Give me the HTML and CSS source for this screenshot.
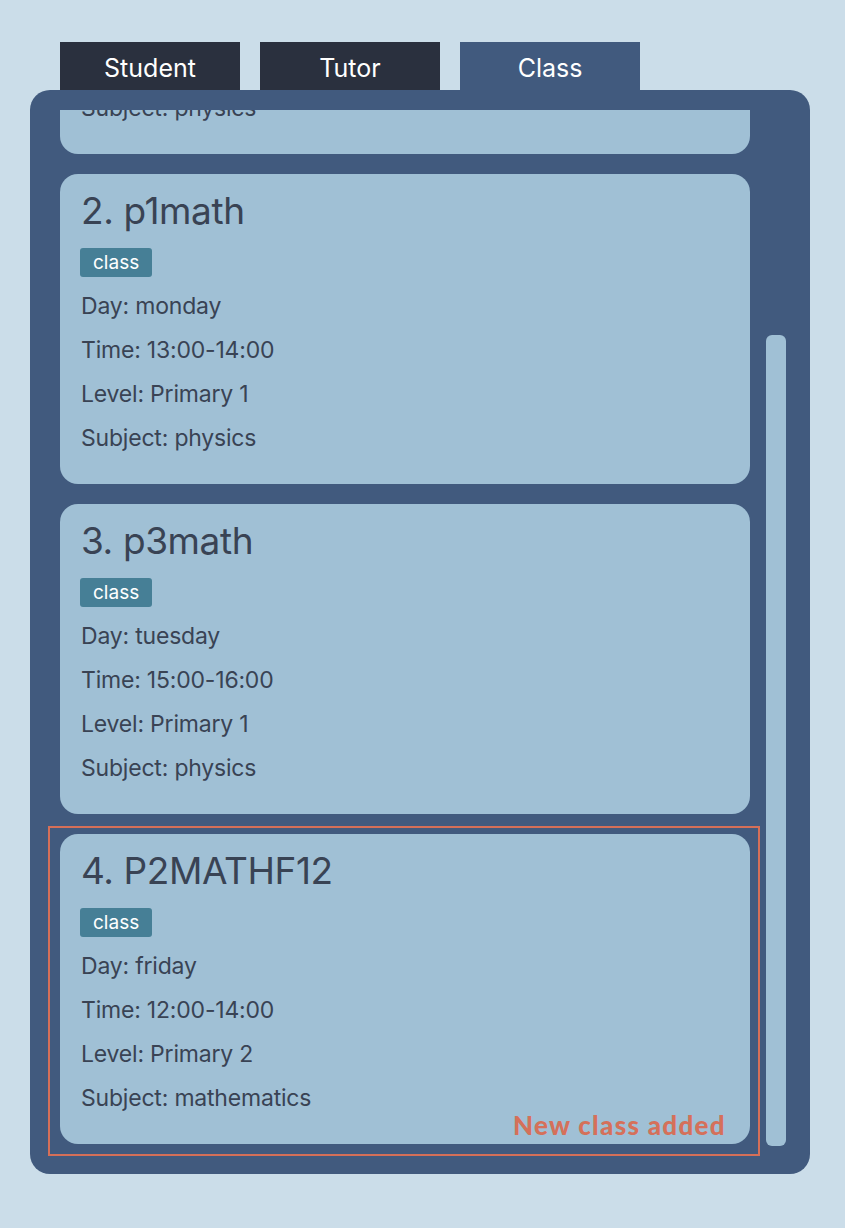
FILE: index.html
```html
<!DOCTYPE html>
<html>
<head>
<meta charset="utf-8">
<link rel="stylesheet" href="styles.css">
</head>
<body>
<div class="app">
  <div class="tabs">
    <div class="tab">Student</div>
    <div class="tab">Tutor</div>
    <div class="tab active">Class</div>
  </div>
  <div class="panel">
    <div class="viewport">
      <div class="list">
        <div class="card">
          <div class="title">1. p1phys</div>
          <span class="tag">class</span>
          <div class="line">Day: monday</div>
          <div class="line">Time: 10:00-11:00</div>
          <div class="line">Level: Primary 1</div>
          <div class="line">Subject: physics</div>
        </div>
        <div class="card">
          <div class="title">2. p1math</div>
          <span class="tag">class</span>
          <div class="line">Day: monday</div>
          <div class="line">Time: 13:00-14:00</div>
          <div class="line">Level: Primary 1</div>
          <div class="line">Subject: physics</div>
        </div>
        <div class="card">
          <div class="title">3. p3math</div>
          <span class="tag">class</span>
          <div class="line">Day: tuesday</div>
          <div class="line">Time: 15:00-16:00</div>
          <div class="line">Level: Primary 1</div>
          <div class="line">Subject: physics</div>
        </div>
        <div class="card">
          <div class="title">4. P2MATHF12</div>
          <span class="tag">class</span>
          <div class="line">Day: friday</div>
          <div class="line">Time: 12:00-14:00</div>
          <div class="line">Level: Primary 2</div>
          <div class="line">Subject: mathematics</div>
        </div>
      </div>
    </div>
    <div class="track"><div class="thumb"></div></div>
    <div class="highlight"><span class="note">New class added</span></div>
  </div>
</div>
</body>
</html>
```
FILE: styles.css
```css
* { box-sizing: border-box; }
body {
  margin: 0;
  background: #cbdde9;
  font-family: Inter, "Noto Sans", sans-serif;
}
.app {
  padding: 42px 35px 0 30px;
}
.tabs {
  display: flex;
  gap: 20px;
  margin-left: 30px;
}
.tab {
  width: 180px;
  height: 48px;
  padding-top: 5px;
  background: #2a303e;
  color: #ffffff;
  font-size: 25px;
  line-height: 43px;
  text-align: center;
}
.tab.active {
  background: #415a7e;
}
.panel {
  position: relative;
  width: 780px;
  height: 1084px;
  background: #415a7e;
  border-radius: 20px;
  padding: 20px 0 0 30px;
  display: flex;
  gap: 16px;
}
.viewport {
  width: 690px;
  height: 1044px;
  overflow: hidden;
}
.list {
  margin-top: -266px;
  display: flex;
  flex-direction: column;
  gap: 20px;
}
.card {
  height: 310px;
  flex: none;
  background: #a0c0d5;
  border-radius: 18px;
  padding: 15px 0 0 21px;
  color: #394354;
}
.title {
  font-size: 37px;
  line-height: 44px;
  letter-spacing: -0.4px;
  margin-bottom: 15px;
}
.tag {
  display: inline-block;
  height: 29px;
  padding: 0 13px;
  background: #467f96;
  color: #ffffff;
  border-radius: 3px;
  font-size: 19px;
  line-height: 30px;
  margin-left: -1px;
  margin-bottom: 7px;
  vertical-align: top;
}
.line {
  font-size: 23px;
  line-height: 44px;
  letter-spacing: -0.2px;
}
.track {
  width: 20px;
  padding-top: 225px;
}
.thumb {
  width: 20px;
  height: 811px;
  background: #a0c0d5;
  border-radius: 6px;
}
.highlight {
  position: absolute;
  left: 18px;
  top: 736px;
  width: 712px;
  height: 330px;
  border: 2px solid #d56f58;
  display: flex;
  justify-content: flex-end;
  align-items: flex-end;
  padding: 0 32px 14px 0;
}
.note {
  font-family: Lato, sans-serif;
  font-weight: 900;
  font-size: 26px;
  line-height: 30px;
  color: #d5705a;
  letter-spacing: 1.3px;
}
```
